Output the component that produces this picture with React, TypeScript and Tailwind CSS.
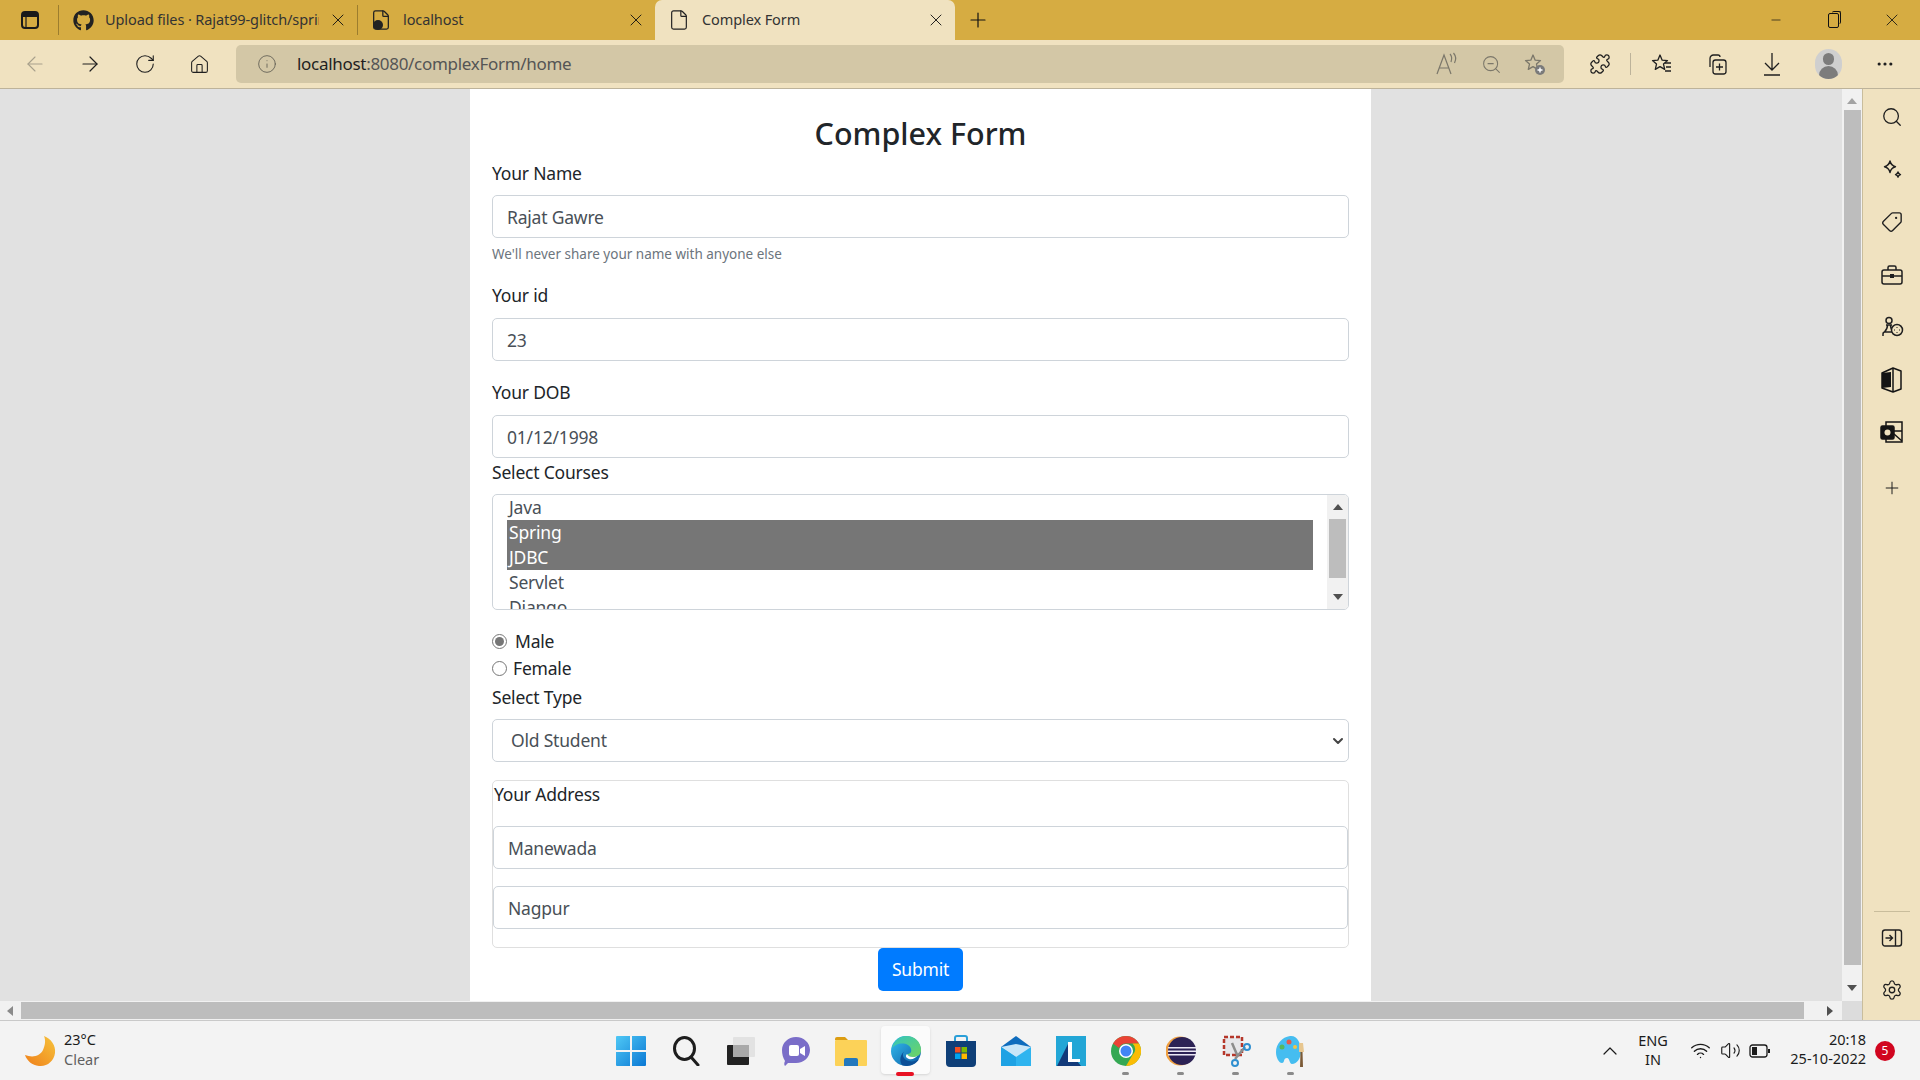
import { ReactNode } from "react"
import {
  ArrowLeft,
  ArrowRight,
  ChevronDown,
  ChevronUp,
  File,
  Home,
  Info,
  Minus,
  MoreHorizontal,
  Plus,
  Puzzle,
  RotateCw,
  Search,
  Settings,
  Tag,
  Volume2,
  Wifi,
  X,
  ZoomOut,
} from "lucide-react"
import { FaGithub } from "react-icons/fa"

const Slot = ({ w, children }: { w: string; children: ReactNode }) => (
  <div className={`${w} flex h-full items-center justify-center`}>{children}</div>
)

const SideSlot = ({ h, children }: { h: string; children: ReactNode }) => (
  <div className={`${h} flex w-full shrink-0 items-center justify-center`}>{children}</div>
)

const TabPanelIcon = () => (
  <svg width="20" height="20" viewBox="0 0 20 20" fill="none">
    <rect x="2" y="2" width="16" height="16" rx="3" stroke="#1a1a1a" strokeWidth="2" />
    <path d="M3 3h14v4H3z" fill="#1a1a1a" />
    <path d="M6 7v10" stroke="#1a1a1a" strokeWidth="1.200" />
  </svg>
)

const FavStar = ({ badge, list }: { badge?: boolean; list?: boolean }) => (
  <svg width="24" height="24" viewBox="0 0 24 24" fill="none" stroke="currentColor" strokeWidth="1.3">
    <path d="M10 3l2.2 5.2 5.3.4-4 3.5 1.2 5.3-4.7-2.8-4.7 2.8 1.2-5.3-4-3.5 5.3-.4z" strokeLinejoin="round" />
    {list && <path d="M15 11h6M16 15h5M15 19h6" />}
    {badge && <circle cx="17" cy="18" r="5" fill="#7a7a7a" stroke="none" />}
    {badge && <path d="M17 15.5v5M14.5 18h5" stroke="#fff" strokeWidth="1.4" />}
  </svg>
)

const Collections = () => (
  <svg width="24" height="24" viewBox="0 0 24 24" fill="none" stroke="currentColor" strokeWidth="1.3">
    <path d="M5 15V6.5A3.5 3.5 0 0 1 8.500 3H13a2 2 0 0 1 2 2" />
    <rect x="8" y="8" width="13" height="14" rx="2.500" />
    <path d="M14.500 11.500v7M11 15h7" />
  </svg>
)

const DownloadIcon = () => (
  <svg width="24" height="26" viewBox="0 0 24 26" fill="none" stroke="currentColor" strokeWidth="1.3">
    <path d="M12 2v17M5 12l7 7 7-7M4 24h16" />
  </svg>
)

const ReadAloud = () => (
  <svg width="26" height="26" viewBox="0 0 26 26" fill="none" stroke="currentColor" strokeWidth="1.200">
    <path d="M3 23l7-19 7 19M5.500 17h9" />
    <path d="M16 3c2 2 2 5 1 8M19.500 2c2.500 3 2.500 7 1 10" />
  </svg>
)

const Profile = () => (
  <div className="flex h-[30px] w-[27px] flex-col items-center justify-end overflow-hidden rounded-full bg-[#cfcfcf]">
    <div className="h-[12px] w-[11px] rounded-full bg-[#7c7c7c]" />
    <div className="mt-[1px] h-[13px] w-[19px] rounded-t-full bg-[#7c7c7c]" />
  </div>
)

const Sparkle = () => (
  <svg width="24" height="24" viewBox="0 0 24 24" fill="none" stroke="#1f1f1f" strokeWidth="1.4" strokeLinejoin="round">
    <path d="M10 3c.8 3.500 2 4.800 5.500 5.700C12 9.600 10.800 11 10 14.500 9.200 11 8 9.600 4.500 8.700 8 7.800 9.200 6.500 10 3z" />
    <path d="M18 14c.4 1.600 1 2.200 2.500 2.600-1.500.4-2.100 1-2.500 2.600-.4-1.600-1-2.200-2.500-2.600 1.500-.4 2.100-1 2.500-2.600z" />
  </svg>
)

const Toolbox = () => (
  <svg width="24" height="22" viewBox="0 0 24 22" fill="none" stroke="#1f1f1f" strokeWidth="1.500">
    <path d="M8 6V3.500A1.500 1.500 0 0 1 9.500 2h5A1.500 1.500 0 0 1 16 3.500V6" />
    <rect x="2" y="6" width="20" height="14" rx="2" />
    <path d="M2 12h20" />
    <rect x="10" y="10" width="4" height="4" fill="#1f1f1f" stroke="none" />
  </svg>
)

const Games = () => (
  <svg width="24" height="24" viewBox="0 0 24 24" fill="none" stroke="#1f1f1f" strokeWidth="1.5">
    <circle cx="9" cy="5.500" r="3" />
    <path d="M6 10h6M7.500 10c0 3-1 5-3 7h9c-2-2-3-4-3-7M3 21v-2a2 2 0 0 1 2-2h8" />
    <circle cx="17" cy="15" r="5.500" fill="#f0e2c0" />
    <path d="M17 12v.5M17 17.500v.5M14 15h.5M19.500 15h.5M17 15h.01" strokeWidth="2" />
  </svg>
)

const Office = () => (
  <svg width="24" height="26" viewBox="0 0 24 26" fill="none">
    <path d="M2 6l11-5 8 3v18l-8 3-11-4z" stroke="#141414" strokeWidth="1.500" strokeLinejoin="round" />
    <path d="M2 6l9-1v15l-9 1z" fill="#141414" />
    <path d="M13 1v24" stroke="#141414" strokeWidth="1.500" />
  </svg>
)

const Outlook = () => (
  <svg width="24" height="24" viewBox="0 0 24 24" fill="none" stroke="#141414" strokeWidth="1.500">
    <path d="M6 6V2h16v20H6v-3" />
    <rect x="1" y="6" width="13" height="13" rx="1.500" fill="#141414" />
    <circle cx="7.500" cy="12.500" r="3" fill="#f0e2c0" stroke="none" />
    <path d="M14 11h8M14 14l8 7" />
  </svg>
)

const SidePanelArrow = () => (
  <svg width="22" height="20" viewBox="0 0 22 20" fill="none" stroke="#1f1f1f" strokeWidth="1.400">
    <rect x="1.500" y="2" width="19" height="16" rx="2.500" />
    <path d="M14.500 2v16M4.500 10h7M8.500 7l3 3-3 3" />
  </svg>
)

const Win11 = () => (
  <svg width="30" height="30" viewBox="0 0 30 30">
    <defs>
      <linearGradient id="win" x1="0" y1="0" x2="1" y2="1">
        <stop offset="0" stopColor="#4fc8f5" />
        <stop offset="1" stopColor="#0a78d4" />
      </linearGradient>
    </defs>
    <path d="M0 1a1 1 0 0 1 1-1h13v14H0zM16 0h13a1 1 0 0 1 1 1v13H16zM0 16h14v14H1a1 1 0 0 1-1-1zM16 16h14v13a1 1 0 0 1-1 1H16z" fill="url(#win)" />
  </svg>
)

const TaskSearch = () => (
  <svg width="30" height="30" viewBox="0 0 30 30" fill="none" stroke="#1d1d1d" strokeWidth="3">
    <ellipse cx="13.500" cy="12.500" rx="10" ry="11" />
    <path d="M20 21l7 8" strokeLinecap="round" />
  </svg>
)

const TaskView = () => (
  <svg width="30" height="30" viewBox="0 0 30 30">
    <rect x="7" y="1" width="22" height="20" rx="1" fill="#e2e2e2" />
    <rect x="1" y="9" width="22" height="20" rx="1" fill="#222" />
    <rect x="7" y="9" width="16" height="12" fill="#a9a9a9" />
  </svg>
)

const Chat = () => (
  <svg width="30" height="30" viewBox="0 0 30 30">
    <path d="M15 1c8 0 14 6 14 13s-6 13-14 13H7l-3 3c-1-1-1-3 0-5C2 22 1 18 1 14 1 7 7 1 15 1z" fill="#7a6dc8" />
    <rect x="8" y="9" width="10" height="11" rx="2" fill="#fff" />
    <path d="M19 13l5-3v10l-5-3z" fill="#fff" />
  </svg>
)

const Folder = () => (
  <svg width="32" height="30" viewBox="0 0 32 30">
    <path d="M0 3a2 2 0 0 1 2-2h8l3 3h-13z" fill="#dc9d12" />
    <rect x="0" y="4" width="32" height="26" rx="1" fill="#fcd258" />
    <path d="M9 30v-6a2 2 0 0 1 2-2h10a2 2 0 0 1 2 2v6z" fill="#2378bd" />
  </svg>
)

const Edge = () => (
  <svg width="30" height="30" viewBox="0 0 30 30">
    <defs>
      <linearGradient id="edgeA" x1="0" y1="0" x2="1" y2="1">
        <stop offset="0" stopColor="#35c1f1" />
        <stop offset="1" stopColor="#0c59a4" />
      </linearGradient>
      <linearGradient id="edgeB" x1="0" y1="0" x2="1" y2="1">
        <stop offset="0" stopColor="#32c4c0" />
        <stop offset="1" stopColor="#70d560" />
      </linearGradient>
    </defs>
    <circle cx="15" cy="15" r="15" fill="url(#edgeA)" />
    <path d="M15 0c9 0 15 6 15 14 0 5-4 7-8 7-3 0-5-1-6-3 3 0 5-2 4-5-1-5-9-7-15-4-2 1-3 2-4 3C3 5 8 0 15 0z" fill="url(#edgeB)" />
    <path d="M14 15c-3 2-3 6 1 9 4 2 9 2 13-1-2 4-7 7-12 7-3 0-5-1-5-1-3-4-2-11 3-14z" fill="#0b4f97" />
    <path d="M16 18c1 2 3 3 6 3 2 0 4-.5 5-2-2 3-6 5-9 4-3-1-4-3-2-5z" fill="#fff" />
  </svg>
)

const Store = () => (
  <svg width="30" height="32" viewBox="0 0 30 32">
    <path d="M9 7V3a2 2 0 0 1 2-2h8a2 2 0 0 1 2 2v4" fill="none" stroke="#2a9fd8" strokeWidth="2" />
    <path d="M0 6h30v22a4 4 0 0 1-4 4H4a4 4 0 0 1-4-4z" fill="#0f3f78" />
    <rect x="9" y="12" width="5.500" height="5.500" fill="#f25022" />
    <rect x="15.500" y="12" width="5.500" height="5.500" fill="#7fba00" />
    <rect x="9" y="18.500" width="5.500" height="5.500" fill="#00a4ef" />
    <rect x="15.500" y="18.500" width="5.500" height="5.500" fill="#ffb900" />
  </svg>
)

const Mail = () => (
  <svg width="30" height="30" viewBox="0 0 30 30">
    <path d="M15 0l15 11v19H0V11z" fill="#0f6cbd" />
    <rect x="0" y="11" width="30" height="19" fill="#2fb4ef" />
    <path d="M0 11l15 10 15-10-15-3z" fill="#c9e6f8" />
    <path d="M0 11l15 10v9H0z" fill="#1ea2e4" />
  </svg>
)

const Lapp = () => (
  <div className="relative flex h-[30px] w-[30px] items-center justify-center bg-[#22a6d6]">
    <svg width="30" height="30" viewBox="0 0 30 30">
      <path d="M1 30L12 8v17h9l4 5z" fill="#123a7a" />
      <path d="M12 6h4v17h8v3H12z" fill="#fff" />
    </svg>
  </div>
)

const Chrome = () => (
  <svg width="30" height="30" viewBox="0 0 30 30">
    <circle cx="15" cy="15" r="15" fill="#34a853" />
    <path d="M15 0a15 15 0 0 1 13 7.500H15a7.500 7.500 0 0 0-7 4.500L2 7.500A15 15 0 0 1 15 0z" fill="#ea4335" />
    <path d="M28 7.500A15 15 0 0 1 15 30l6.500-11a7.500 7.500 0 0 0 0-11.500z" fill="#fbbc04" />
    <circle cx="15" cy="15" r="7" fill="#fff" />
    <circle cx="15" cy="15" r="5.500" fill="#4285f4" />
  </svg>
)

const Eclipse = () => (
  <svg width="30" height="30" viewBox="0 0 30 30">
    <circle cx="14" cy="15" r="14.500" fill="#f0a040" />
    <circle cx="16" cy="15" r="14" fill="#2c2255" />
    <path d="M2 11h28v1.500H2zM2 14.500h28V16H2zM2 18h28v1.500H2z" fill="#ece9f5" />
  </svg>
)

const Snip = () => (
  <svg width="30" height="32" viewBox="0 0 30 32" fill="none">
    <rect x="3" y="2" width="18" height="18" fill="#e7e7ea" stroke="#b5372a" strokeWidth="2.500" strokeDasharray="4 2" />
    <path d="M11 8l6 14M24 12l-10 12" stroke="#8c8c8c" strokeWidth="2.500" />
    <circle cx="26" cy="12" r="3" stroke="#2f8fd0" strokeWidth="2" />
    <circle cx="14" cy="28" r="3" stroke="#2f8fd0" strokeWidth="2" />
  </svg>
)

const Paint = () => (
  <svg width="30" height="32" viewBox="0 0 30 32">
    <path d="M14 1C6 2 0 9 0 17c0 6 3 11 6 11 3 0 1-5 5-5 3 0 2 6 5 6 5 0 9-6 9-13C25 8 21 0 14 1z" fill="#45bdf0" />
    <circle cx="13" cy="7" r="2.500" fill="#e25a4e" />
    <circle cx="6" cy="12" r="2.500" fill="#56b85c" />
    <circle cx="19" cy="12" r="2" fill="#f2c443" />
    <path d="M23 8l4 0 1 9-5 0z" fill="#e7c68f" />
    <path d="M24.500 17h2l.5 15h-3z" fill="#7b5a36" />
  </svg>
)

const Moon = () => (
  <svg width="32" height="32" viewBox="0 0 32 32">
    <defs>
      <linearGradient id="moon" x1="1" y1="0" x2="0" y2="1">
        <stop offset="0" stopColor="#f6c33c" />
        <stop offset="1" stopColor="#ef7f1a" />
      </linearGradient>
    </defs>
    <path d="M20 1c7 3 12 9 11 17-1 8-8 14-16 13C8 30 3 26 1 20c8 3 15 1 18-5 2-5 3-9 1-14z" fill="url(#moon)" />
  </svg>
)

const Battery = () => (
  <svg width="22" height="14" viewBox="0 0 22 14" fill="none">
    <rect x="1" y="1" width="17" height="12" rx="2.500" stroke="#1b1b1b" strokeWidth="1.300" />
    <rect x="3" y="3" width="5" height="8" fill="#1b1b1b" />
    <rect x="19" y="5" width="2" height="4" fill="#1b1b1b" />
  </svg>
)

const Triangle = ({ dir, className }: { dir: "up" | "down" | "left" | "right"; className: string }) => {
  const points = { up: "0,8 5,2 10,8", down: "0,2 5,8 10,2", left: "8,0 2,5 8,10", right: "2,0 8,5 2,10" }[dir]
  return (
    <svg width="10" height="10" viewBox="0 0 10 10" className={className}>
      <polygon points={points} fill="currentColor" />
    </svg>
  )
}

const TabBar = () => (
  <div className="flex h-10 shrink-0 bg-[#d6ac42] text-[14.500px] tracking-[-0.1px] text-[#333333]">
    <div className="flex h-[30px] w-[59px] items-center justify-center self-center border-r border-[#9c7d2e] pl-[2px]">
      <TabPanelIcon />
    </div>
    <div className="flex w-[298px] items-center pl-[14px] pr-[9px]">
      <FaGithub size={21} className="shrink-0 text-[#222222]" />
      <span className="ml-[11px] w-[214px] overflow-hidden whitespace-nowrap">Upload files · Rajat99-glitch/spring-boot</span>
      <X size={20} strokeWidth={1.1} className="ml-auto shrink-0 text-[#111111]" />
    </div>
    <div className="flex h-[30px] w-[298px] items-center self-center border-l border-[#9c7d2e] pl-3 pr-[9px]">
      <div className="relative shrink-0">
        <File size={22} strokeWidth={1.4} className="text-[#222222]" />
        <div className="absolute bottom-[1px] left-[3px] h-[10px] w-[10px] rounded-full bg-[#222222]" />
      </div>
      <span className="ml-[11px]">localhost</span>
      <X size={20} strokeWidth={1.1} className="ml-auto shrink-0 text-[#111111]" />
    </div>
    <div className="flex w-[300px] items-center rounded-t-[7px] bg-[#f0e2c0] pl-[13px] pr-[9px]">
      <File size={22} strokeWidth={1.3} className="shrink-0 text-[#222222]" />
      <span className="ml-3">Complex Form</span>
      <X size={20} strokeWidth={1.1} className="ml-auto shrink-0 text-[#111111]" />
    </div>
    <div className="flex w-[45px] items-center justify-center">
      <Plus size={24} strokeWidth={1.2} className="text-[#111111]" />
    </div>
    <div className="flex-1" />
    <Slot w="w-[58px]"><Minus size={14} strokeWidth={1.2} className="text-[#111111]" /></Slot>
    <div className="flex h-full w-[58px] items-center justify-center pr-[2px]">
      <div className="relative h-[15px] w-[11px] rounded-[2px] border border-[#111111]">
        <div className="absolute -right-[3px] -top-[3px] h-[13px] w-[9px] rounded-[2px] border-r border-t border-[#111111]" />
      </div>
    </div>
    <Slot w="w-[57px]"><X size={20} strokeWidth={1} className="text-[#111111]" /></Slot>
  </div>
)

const Toolbar = () => (
  <div className="flex h-[49px] shrink-0 items-center border-b border-[#bdb39a] bg-[#f0e2c0] pl-[7px] text-[#1f1f1f]">
    <Slot w="w-[55px]"><ArrowLeft size={24} strokeWidth={1.1} className="text-[#a8a08c]" /></Slot>
    <Slot w="w-[55px]"><ArrowRight size={24} strokeWidth={1.2} /></Slot>
    <Slot w="w-[55px]"><RotateCw size={22} strokeWidth={1.2} /></Slot>
    <Slot w="w-[55px]"><Home size={21} strokeWidth={1.2} /></Slot>
    <div className="ml-[9px] flex h-[38px] w-[1328px] items-center rounded-[5px] bg-[#d3c7a6] pl-[21px] pr-[7px]">
      <Info size={20} strokeWidth={1} className="text-[#5d5a50]" />
      <div className="ml-5 text-[17px] tracking-[-0.3px] text-[#555555]">
        <span className="text-[#1f1f1f]">localhost</span>:8080/complexForm/home
      </div>
      <div className="ml-auto flex h-full items-center text-[#7b776a]">
        <Slot w="w-11"><ReadAloud /></Slot>
        <Slot w="w-11"><ZoomOut size={21} strokeWidth={1.2} /></Slot>
        <Slot w="w-11"><FavStar badge /></Slot>
      </div>
    </div>
    <div className="ml-[9px] flex h-full items-center">
      <Slot w="w-[54px]"><Puzzle size={22} strokeWidth={1.4} /></Slot>
      <div className="ml-[3px] mr-[3px] h-[22px] w-px bg-[#bdb39a]" />
      <Slot w="w-[55px]"><FavStar list /></Slot>
      <Slot w="w-[55px]"><Collections /></Slot>
      <Slot w="w-[55px]"><DownloadIcon /></Slot>
      <Slot w="w-[58px]"><Profile /></Slot>
      <Slot w="w-[56px]"><MoreHorizontal size={20} strokeWidth={1.8} /></Slot>
    </div>
  </div>
)

const labelClass = "h-6 text-[17.500px] leading-6 tracking-[-0.2px] text-[#212529]"
const inputClass =
  "block h-[43px] w-full rounded-[5px] border border-[#ced4da] bg-white px-[14px] text-[17.500px] tracking-[-0.2px] text-[#495057] outline-none"

const courses = [
  { name: "Java" },
  { name: "Spring", selected: true },
  { name: "JDBC", selected: true },
  { name: "Servlet" },
  { name: "Django" },
]

const CourseList = () => (
  <div className="mt-[10px] flex h-[116px] overflow-hidden rounded-[5px] border border-[#ced4da]">
    <div className="flex-1 pl-[14px] pr-[14px]">
      {courses.map((c) => (
        <div
          key={c.name}
          className={`h-[25px] px-[2px] text-[17.500px] leading-[25px] tracking-[-0.2px] ${c.selected ? "bg-[#767676] text-white" : "text-[#495057]"}`}
        >
          {c.name}
        </div>
      ))}
    </div>
    <div className="flex w-[21px] flex-col items-center bg-[#f1f1f1]">
      <Triangle dir="up" className="mt-[7px] text-[#505050]" />
      <div className="mt-[7px] h-[59px] w-[17px] bg-[#bdbdbd]" />
      <Triangle dir="down" className="mt-[14px] text-[#505050]" />
    </div>
  </div>
)

const Radio = ({ checked, label, className }: { checked?: boolean; label: string; className: string }) => (
  <div className={`flex h-6 items-center text-[17.500px] tracking-[-0.2px] text-[#212529] ${className}`}>
    <div className="flex h-[15px] w-[15px] items-center justify-center rounded-full border border-[#767676] bg-white">
      {checked && <div className="h-[9px] w-[9px] rounded-full bg-[#767676]" />}
    </div>
    <span className={checked ? "ml-[8px]" : "ml-[6px]"}>{label}</span>
  </div>
)

const FormCard = () => (
  <div className="ml-[470px] h-full w-[901px] bg-white px-[22px] pt-6">
    <h3 className="h-10 text-center text-[30.500px] font-medium leading-10 text-[#212529]">Complex Form</h3>
    <div className={`mt-2 ${labelClass}`}>Your Name</div>
    <input readOnly value="Rajat Gawre" className={`mt-[10px] ${inputClass}`} />
    <div className="mt-[6px] h-5 text-[13.500px] leading-5 text-[#6c757d]">We'll never share your name with anyone else</div>
    <div className={`mt-[19px] ${labelClass}`}>Your id</div>
    <input readOnly value="23" className={`mt-[11px] ${inputClass}`} />
    <div className={`mt-[19px] ${labelClass}`}>Your DOB</div>
    <input readOnly value="01/12/1998" className={`mt-[11px] ${inputClass}`} />
    <div className={`mt-[2px] ${labelClass}`}>Select Courses</div>
    <CourseList />
    <Radio checked label="Male" className="mt-[19px]" />
    <Radio label="Female" className="mt-[3px]" />
    <div className={`mt-[5px] ${labelClass}`}>Select Type</div>
    <div className="mt-[10px] flex h-[43px] items-center justify-between rounded-[5px] border border-[#ced4da] pl-[18px] pr-[2px] text-[17.500px] tracking-[-0.2px] text-[#495057]">
      Old Student
      <ChevronDown size={16} strokeWidth={3} className="text-[#444444]" />
    </div>
    <div className="mt-[18px] h-[168px] rounded-[5px] border border-[#dfdfdf]">
      <div className="h-[30px] pl-px text-[17.500px] leading-[27px] tracking-[-0.2px] text-[#212529]">Your Address</div>
      <input readOnly value="Manewada" className={`mt-[15px] ${inputClass}`} />
      <input readOnly value="Nagpur" className={`mt-[17px] ${inputClass}`} />
    </div>
    <div className="flex justify-center">
      <button className="h-[43px] w-[85px] rounded-[5px] bg-[#007bff] text-[17.500px] tracking-[-0.2px] text-white">Submit</button>
    </div>
  </div>
)

const VerticalScroll = () => (
  <div className="flex w-5 flex-col items-center bg-[#f1f1f1]">
    <Triangle dir="up" className="mt-[7px] text-[#a3a3a3]" />
    <div className="mt-1 h-[855px] w-[17px] bg-[#bdbdbd]" />
    <Triangle dir="down" className="mt-[18px] text-[#505050]" />
  </div>
)

const HorizontalScroll = () => (
  <div className="flex h-[19px] shrink-0 items-center bg-[#f1f1f1]">
    <Triangle dir="left" className="ml-[5px] text-[#8a8a8a]" />
    <div className="ml-[6px] h-[17px] w-[1783px] bg-[#bdbdbd]" />
    <Triangle dir="right" className="ml-[21px] text-[#505050]" />
    <div className="ml-auto h-full w-5 bg-[#dcdcdc]" />
  </div>
)

const Sidebar = () => (
  <div className="flex w-[58px] shrink-0 flex-col items-center border-l border-[#c9bd9c] bg-[#f0e2c0] pb-1 pt-[2px] text-[#1f1f1f]">
    <SideSlot h="h-[52px]"><Search size={22} strokeWidth={1.4} /></SideSlot>
    <SideSlot h="h-[53px]"><Sparkle /></SideSlot>
    <SideSlot h="h-[52px]"><Tag size={22} strokeWidth={1.5} className="rotate-90" /></SideSlot>
    <SideSlot h="h-[53px]"><Toolbox /></SideSlot>
    <SideSlot h="h-[52px]"><Games /></SideSlot>
    <SideSlot h="h-[53px]"><Office /></SideSlot>
    <SideSlot h="h-[52px]"><Outlook /></SideSlot>
    <SideSlot h="h-[60px]"><Plus size={20} strokeWidth={1.2} /></SideSlot>
    <div className="mt-auto h-px w-9 bg-[#c9bd9c]" />
    <SideSlot h="h-[52px]"><SidePanelArrow /></SideSlot>
    <SideSlot h="h-[52px]"><Settings size={22} strokeWidth={1.4} /></SideSlot>
  </div>
)

const taskIcons = [
  { id: "start", icon: <Win11 /> },
  { id: "search", icon: <TaskSearch /> },
  { id: "view", icon: <TaskView /> },
  { id: "chat", icon: <Chat /> },
  { id: "files", icon: <Folder /> },
  { id: "edge", icon: <Edge />, active: true },
  { id: "store", icon: <Store /> },
  { id: "mail", icon: <Mail /> },
  { id: "l", icon: <Lapp /> },
  { id: "chrome", icon: <Chrome />, open: true },
  { id: "eclipse", icon: <Eclipse />, open: true },
  { id: "snip", icon: <Snip />, open: true },
  { id: "paint", icon: <Paint />, open: true },
]

const Taskbar = () => (
  <div className="flex h-[60px] shrink-0 items-center border-t border-[#c9c9c9] bg-[#f3f3f3]">
    <div className="flex w-[603px] items-center pl-6">
      <Moon />
      <div className="mb-[3px] ml-2 text-[14.500px] leading-5">
        <div className="text-[#1b1b1b]">23°C</div>
        <div className="text-[#5f5f5f]">Clear</div>
      </div>
    </div>
    {taskIcons.map((t) => (
      <div key={t.id} className="relative flex h-full w-[55px] items-center justify-center">
        {t.active && <div className="absolute bottom-[6px] left-[3px] top-[5px] w-[49px] rounded-[4px] bg-[#fbfbfb] shadow-sm" />}
        <div className="relative">{t.icon}</div>
        {t.active && <div className="absolute bottom-[4px] left-[18px] h-1 w-[18px] rounded-full bg-[#e81123]" />}
        {t.open && <div className="absolute bottom-[5px] left-[24px] h-[3px] w-[7px] rounded-full bg-[#8a8a8a]" />}
      </div>
    ))}
    <div className="ml-[272px] flex h-full items-center">
      <Slot w="w-10"><ChevronUp size={24} strokeWidth={1.2} className="text-[#1b1b1b]" /></Slot>
      <div className="mb-[2px] w-[46px] text-center text-[14.500px] leading-[19px] text-[#1b1b1b]">
        <div>ENG</div>
        <div>IN</div>
      </div>
      <div className="ml-[9px] flex h-full items-center">
        <Slot w="w-[30px]"><Wifi size={21} strokeWidth={1.6} className="text-[#1b1b1b]" /></Slot>
        <Slot w="w-[30px]"><Volume2 size={21} strokeWidth={1.3} className="text-[#1b1b1b]" /></Slot>
        <Slot w="w-[30px]"><Battery /></Slot>
      </div>
      <div className="mb-[3px] w-[91px] text-right text-[14.500px] leading-[19px] text-[#1b1b1b]">
        <div>20:18</div>
        <div>25-10-2022</div>
      </div>
      <div className="ml-[9px] flex h-5 w-5 items-center justify-center rounded-full bg-[#d1051f] text-[12px] text-white">5</div>
    </div>
  </div>
)

export default function App() {
  return (
    <div className="flex h-[1080px] w-[1920px] flex-col overflow-hidden font-['Noto_Sans','Liberation_Sans',sans-serif]">
      <TabBar />
      <Toolbar />
      <div className="flex min-h-0 flex-1">
        <div className="flex min-w-0 flex-1 flex-col">
          <div className="flex min-h-0 flex-1">
            <div className="min-w-0 flex-1 overflow-hidden bg-[#e1e1e1]">
              <FormCard />
            </div>
            <VerticalScroll />
          </div>
          <HorizontalScroll />
        </div>
        <Sidebar />
      </div>
      <Taskbar />
    </div>
  )
}
